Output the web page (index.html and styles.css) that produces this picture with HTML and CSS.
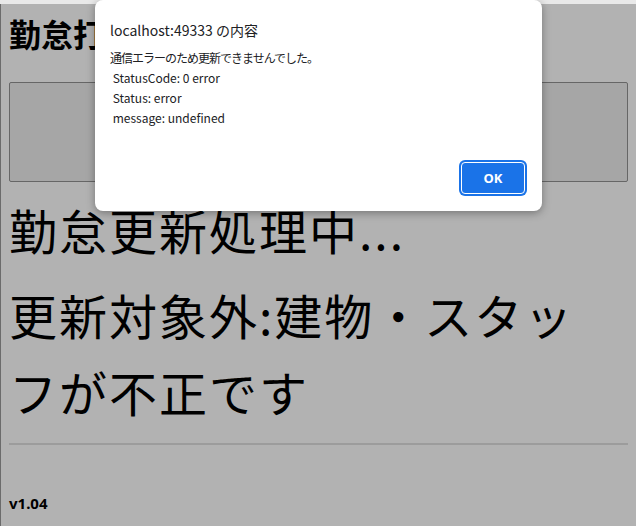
FILE: index.html
```html
<!DOCTYPE html>
<html lang="ja">
<head>
    <meta charset="UTF-8">
    <meta name="viewport" content="width=device-width, initial-scale=1.0">
    <title>勤怠打刻</title>
    <link rel="stylesheet" href="styles.css">
</head>
<body>
    <div class="page">
        <h1 class="title">勤怠打刻</h1>

        <!-- 打刻ボタン -->
        <div class="panel"></div>

        <div class="status">勤怠更新処理中...</div>
        <div class="status status-msg">更新対象外:建物・スタッフが不正です</div>

        <hr class="sep">

        <div class="version">v1.04</div>
    </div>

    <!-- alert ダイアログ -->
    <div class="dialog">
        <div class="dialog-title">localhost:49333 の内容</div>
        <div class="dialog-body">
            <div class="dialog-line dialog-jp">通信エラーのため更新できませんでした。</div>
            <div class="dialog-line"> StatusCode: 0 error</div>
            <div class="dialog-line"> Status: error</div>
            <div class="dialog-line"> message: undefined</div>
        </div>
        <div class="dialog-actions">
            <button class="btn-ok">OK</button>
        </div>
    </div>
</body>
</html>
```

FILE: styles.css
```css
body {
    margin: 0;
    padding: 0;
    font-family: "Noto Sans CJK JP", "Noto Sans", sans-serif;
    background-color: #b2b2b2;
    border-top: 4px solid #e9e9e9;
    color: #000;
}

.page {
    min-height: 522px;
    box-sizing: border-box;
    border-left: 1px solid #6b6b6b;
    padding: 0 8px;
    overflow: hidden;
}

.title {
    margin: 6px 0 0 0;
    font-size: 32px;
    font-weight: bold;
    line-height: 46px;
}

.panel {
    margin-top: 26px;
    height: 98px;
    background-color: #a6a6a6;
    border: 1px solid #666;
    border-radius: 2px;
}

.status {
    margin-top: 9px;
    font-size: 48px;
    letter-spacing: 2px;
    line-height: 77px;
}

.status-msg {
    margin-top: 8px;
    max-width: 590px;
}

.sep {
    margin: 13px 0 0 0;
    border: none;
    border-top: 2px solid #9c9c9c;
}

.version {
    margin-top: 48px;
    font-family: "Noto Sans", sans-serif;
    font-size: 15px;
    font-weight: bold;
}

.dialog {
    position: absolute;
    top: 0;
    left: 95px;
    width: 447px;
    height: 211px;
    box-sizing: border-box;
    background-color: #fff;
    border-radius: 8px;
    box-shadow: 0 2px 8px rgba(0, 0, 0, 0.35);
    padding: 20px 16px 0 15px;
    color: #202124;
}

.dialog-title {
    font-size: 14px;
    line-height: 20px;
}

.dialog-body {
    margin-top: 8px;
    font-size: 12px;
    line-height: 20px;
}

.dialog-line {
    white-space: pre;
}

.dialog-jp {
    letter-spacing: -1px;
}

.dialog-actions {
    display: flex;
    justify-content: flex-end;
    margin-top: 34px;
}

.btn-ok {
    width: 64px;
    height: 32px;
    margin-right: 1px;
    background-color: #1a73e8;
    color: #fff;
    border: 1px solid #fff;
    border-radius: 4px;
    box-shadow: 0 0 0 2px #1a73e8;
    font-family: "Noto Sans", sans-serif;
    font-size: 13px;
    font-weight: bold;
}
```
